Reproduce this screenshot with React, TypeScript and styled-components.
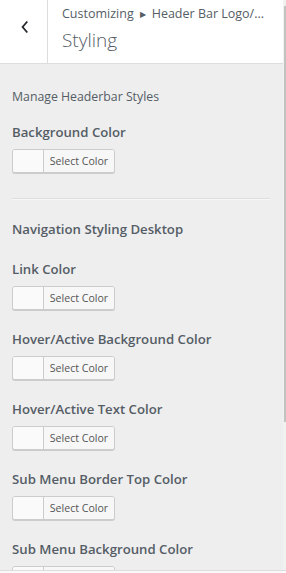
import React from "react";
import styled, { createGlobalStyle } from "styled-components";

const Global = createGlobalStyle`
  html, body { margin: 0; padding: 0; }
  body { font-family: "Open Sans", "Noto Sans", sans-serif; background: #f9f9f9; }
  * { box-sizing: border-box; }
`;

const Page = styled.div`
  width: 286px;
  height: 573px;
  display: flex;
  flex-direction: column;
  overflow: hidden;
`;

const Main = styled.div`
  height: 570px;
  display: flex;
  flex-direction: row;
  overflow: hidden;
`;

const Panel = styled.div`
  flex: 1;
  display: flex;
  flex-direction: column;
  background: #eeeeee;
  overflow: hidden;
`;

const ScrollTrack = styled.div`
  width: 3px;
  background: #f1f1f1;
  display: flex;
  justify-content: center;
  padding-top: 6px;
`;

const ScrollThumb = styled.div`
  width: 2px;
  height: 416px;
  background: #c2c2c2;
`;

const Footer = styled.div`
  flex: 1;
  border-top: 1px solid #dddddd;
  background: #f9f9f9;
`;

const Header = styled.div`
  display: flex;
  height: 64px;
  background: #ffffff;
  border-bottom: 1px solid #dddddd;
  flex-shrink: 0;
`;

const BackButton = styled.div`
  width: 48px;
  border-right: 1px solid #dddddd;
  display: flex;
  justify-content: center;
  padding: 20px 0 0 2px;
  color: #23282d;
`;

const TitleBlock = styled.div`
  padding: 5px 0 0 14px;
  display: flex;
  flex-direction: column;
  min-width: 0;
`;

const Crumb = styled.span`
  font-size: 12.5px;
  line-height: 18px;
  color: #555d66;
  white-space: nowrap;
`;

const Arrow = styled.span`
  font-size: 8px;
  margin: 0 6px;
  position: relative;
  top: -1px;
`;

const Title = styled.h3`
  margin: 3px 0 0 0;
  font-size: 19px;
  line-height: 26px;
  font-weight: 300;
  color: #555d66;
`;

const Content = styled.div`
  padding: 24px 13px 0 12px;
  display: flex;
  flex-direction: column;
`;

const Description = styled.p`
  margin: 0 0 16px 0;
  font-size: 12.3px;
  line-height: 18px;
  color: #555d66;
`;

const Control = styled.div<{ $last?: boolean }>`
  display: flex;
  flex-direction: column;
  margin-bottom: ${(p) => (p.$last ? "25px" : "19px")};
`;

const Label = styled.span`
  font-size: 13.2px;
  line-height: 20px;
  font-weight: 600;
  color: #555d66;
  margin-bottom: 7px;
`;

const Heading = styled.h4`
  margin: 19px 0 20px 0;
  font-size: 13.2px;
  line-height: 20px;
  font-weight: 600;
  color: #555d66;
`;

const Divider = styled.hr`
  margin: 0;
  border: none;
  border-top: 1px solid #dddddd;
  border-bottom: 1px solid #f8f8f8;
  height: 0;
`;

const ColorButton = styled.button`
  display: flex;
  align-items: stretch;
  align-self: flex-start;
  height: 24px;
  padding: 0;
  margin: 0;
  border: 1px solid #cccccc;
  border-radius: 3px;
  box-shadow: 0 1px 0 #cccccc;
  background: #fafafa;
  cursor: pointer;
  font-family: inherit;
`;

const Swatch = styled.span`
  width: 30px;
  background: #fafafa;
  border-radius: 2px 0 0 2px;
`;

const ButtonText = styled.span`
  width: 71px;
  border-left: 1px solid #cccccc;
  border-radius: 0 2px 2px 0;
  background: #f7f7f7;
  color: #555555;
  font-size: 10.6px;
  line-height: 22px;
  text-align: center;
`;

const Chevron = () => (
  <svg width="10" height="14" viewBox="0 0 10 14" fill="none">
    <path d="M7.3 1.5 L2.6 7 L7.3 12.5" stroke="currentColor" strokeWidth="1.8" />
  </svg>
);

const ColorControl = ({ label, last }: { label: string; last?: boolean }) => (
  <Control $last={last}>
    <Label>{label}</Label>
    <ColorButton type="button">
      <Swatch />
      <ButtonText>Select Color</ButtonText>
    </ColorButton>
  </Control>
);

export default function App() {
  return (
    <Page>
      <Global />
      <Main>
        <Panel>
          <Header>
            <BackButton>
              <Chevron />
            </BackButton>
            <TitleBlock>
              <Crumb>
                Customizing<Arrow>▶</Arrow>Header Bar Logo/...
              </Crumb>
              <Title>Styling</Title>
            </TitleBlock>
          </Header>
          <Content>
            <Description>Manage Headerbar Styles</Description>
            <ColorControl label="Background Color" last />
            <Divider />
            <Heading>Navigation Styling Desktop</Heading>
            <ColorControl label="Link Color" />
            <ColorControl label="Hover/Active Background Color" />
            <ColorControl label="Hover/Active Text Color" />
            <ColorControl label="Sub Menu Border Top Color" />
            <ColorControl label="Sub Menu Background Color" />
          </Content>
        </Panel>
        <ScrollTrack>
          <ScrollThumb />
        </ScrollTrack>
      </Main>
      <Footer />
    </Page>
  );
}
